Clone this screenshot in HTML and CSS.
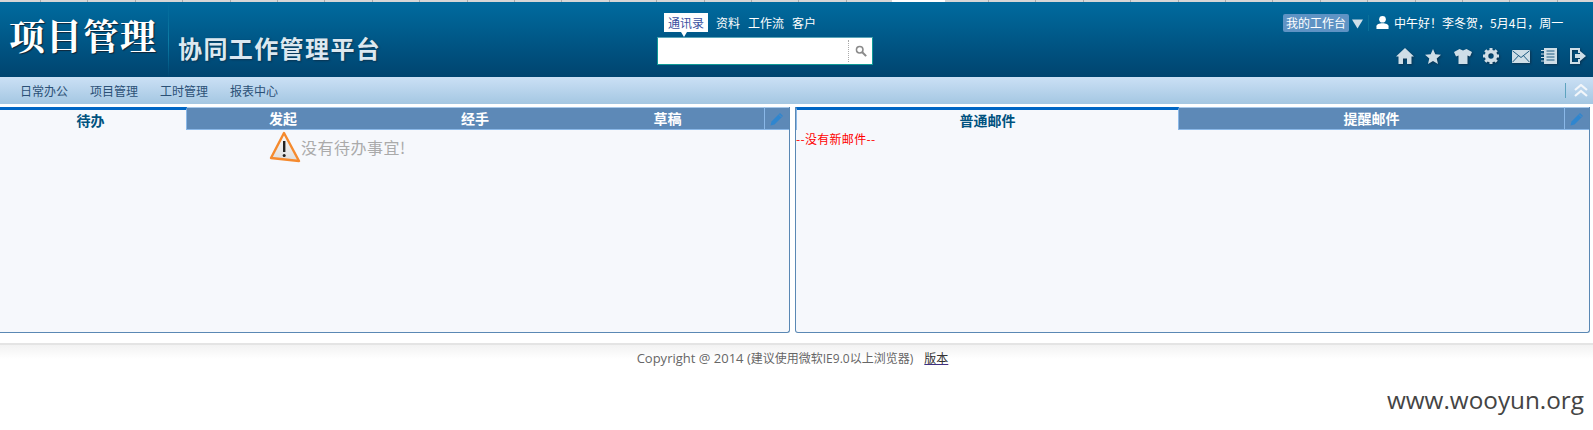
FILE: index.html
```html
<!DOCTYPE html>
<html lang="zh-CN">
<head>
<meta charset="utf-8">
<title>协同工作管理平台</title>
<link rel="stylesheet" href="styles.css">
</head>
<body>
<div class="strip"><span class="strip-active"></span></div>
<header class="header">
  <div class="brand">
    <div class="logo">项目管理</div>
    <div class="subtitle">协同工作管理平台</div>
  </div>
  <div class="search-col">
    <div class="search-tabs">
      <span class="search-tab active">通讯录</span>
      <span class="search-tab">资料</span>
      <span class="search-tab">工作流</span>
      <span class="search-tab">客户</span>
    </div>
    <div class="search-box">
      <span class="search-input"></span>
      <span class="search-btn">
        <svg width="12" height="12" viewBox="0 0 14 14"><circle cx="5.5" cy="5.5" r="3.8" fill="none" stroke="#8a8a8a" stroke-width="1.8"/><path d="M8.5 8.5L13 13" stroke="#8a8a8a" stroke-width="2.4"/></svg>
      </span>
    </div>
  </div>
  <div class="user-col">
    <div class="user-row">
      <span class="workbench">我的工作台</span>
      <svg class="caret" width="11" height="10" viewBox="0 0 12 10"><path d="M0 0H12L6 10Z" fill="#cfdfe9"/></svg>
      <span class="user-sep"></span>
      <svg class="user-icon" width="13" height="15" viewBox="0 0 14 15"><circle cx="7" cy="4" r="3.6" fill="#fff"/><path d="M0.500 14.500V11.500C0.500 9.500 3.500 8.300 7 8.300C10.500 8.300 13.500 9.500 13.500 11.500V14.500Z" fill="#fff"/></svg>
      <span class="greeting">中午好！李冬贺，5月4日，周一</span>
    </div>
    <div class="tool-row">
      <svg width="18" height="16" viewBox="0 0 18 16"><path d="M9 0L18 8.500H15.500V16H11V10.500H7V16H2.500V8.500H0Z" fill="#cfdee7"/></svg>
      <svg width="16" height="15" viewBox="0 0 16 15"><path d="M8 0L10.300 5.200L16 5.800L11.700 9.500L13 15L8 12.100L3 15L4.300 9.500L0 5.800L5.700 5.200Z" fill="#cfdee7"/></svg>
      <svg width="18" height="15" viewBox="0 0 18 15"><path d="M5.500 0L9 1.500L12.500 0L18 3L16 7.500L13.500 6.500V15H4.500V6.500L2 7.500L0 3Z" fill="#cfdee7"/></svg>
      <svg width="16" height="16" viewBox="0 0 16 16"><circle cx="8" cy="8" r="4.500" fill="none" stroke="#cfdee7" stroke-width="3.600"/><path d="M8 0V3M8 13V16M0 8H3M13 8H16M2.300 2.300L4.400 4.400M11.600 11.600L13.700 13.700M13.700 2.300L11.600 4.400M4.400 11.600L2.300 13.700" stroke="#cfdee7" stroke-width="3"/></svg>
      <svg width="18" height="13" viewBox="0 0 18 13"><rect width="18" height="13" fill="#cfdee7"/><path d="M0.500 0.800L9 7.500L17.500 0.800M0.500 12.200L6.500 5.700M17.500 12.200L11.500 5.700" fill="none" stroke="#1f5c82" stroke-width="1"/></svg>
      <svg width="16" height="16" viewBox="0 0 16 16"><rect x="3" y="0" width="13" height="16" fill="#cfdee7"/><path d="M5.500 3H13.500M5.500 6H13.500M5.500 9H13.500M5.500 12H13.500" stroke="#1f5c82" stroke-width="1"/><path d="M0 2.500H3M0 6H3M0 9.500H3M0 13H3" stroke="#cfdee7" stroke-width="1.200"/></svg>
      <svg width="16" height="16" viewBox="0 0 16 16"><path d="M0 0H10V5H8V2H2V14H8V11H10V16H0Z" fill="#cfdee7"/><path d="M5 6H10V3L16 8L10 13V10H5Z" fill="#cfdee7"/></svg>
    </div>
  </div>
</header>
<nav class="nav">
  <a class="nav-item">日常办公</a>
  <a class="nav-item">项目管理</a>
  <a class="nav-item">工时管理</a>
  <a class="nav-item">报表中心</a>
  <span class="nav-spacer"></span>
  <span class="nav-sep"></span>
  <svg class="collapse" width="14" height="13" viewBox="0 0 14 13"><path d="M1 6L7 1L13 6M1 12L7 7L13 12" fill="none" stroke="#f2f6fa" stroke-width="2.200"/></svg>
</nav>
<div class="gap"></div>
<main class="panels">
  <section class="panel panel-left">
    <div class="tabs">
      <span class="tab active">待办</span>
      <span class="tab">发起</span>
      <span class="tab">经手</span>
      <span class="tab">草稿</span>
      <span class="tab-edit">
        <svg width="14" height="14" viewBox="0 0 14 14"><path d="M0.500 13.500L1.500 9.500L10 1L13 4L4.500 12.500Z" fill="#2f86cf"/><path d="M9 2.500L11.500 5" stroke="#5d89b7" stroke-width="1"/></svg>
      </span>
    </div>
    <div class="empty">
      <svg width="32" height="32" viewBox="0 0 32 32">
        <defs><linearGradient id="warn" x1="0" y1="0" x2="0" y2="1"><stop offset="0" stop-color="#fafafa"/><stop offset="1" stop-color="#dedede"/></linearGradient></defs>
        <path d="M15 2L30 30L2 27Z" fill="url(#warn)" stroke="#f58a2e" stroke-width="2.400" stroke-linejoin="round"/>
        <path d="M15.200 10V21" stroke="#222" stroke-width="2.400"/>
        <circle cx="15.200" cy="24.500" r="1.500" fill="#222"/>
      </svg>
      <span>没有待办事宜!</span>
    </div>
  </section>
  <section class="panel panel-right">
    <div class="tabs">
      <span class="tab wide active">普通邮件</span>
      <span class="tab wide">提醒邮件</span>
      <span class="tab-edit">
        <svg width="14" height="14" viewBox="0 0 14 14"><path d="M0.500 13.500L1.500 9.500L10 1L13 4L4.500 12.500Z" fill="#2f86cf"/><path d="M9 2.500L11.500 5" stroke="#5d89b7" stroke-width="1"/></svg>
      </span>
    </div>
    <div class="no-mail">--没有新邮件--</div>
  </section>
</main>
<footer class="footer">
  <span><span class="latin">Copyright @ 2014 (</span>建议使用微软IE9.0以上浏览器)</span>
  <a class="version">版本</a>
</footer>
<div class="watermark">www.wooyun.org</div>
</body>
</html>
```

FILE: styles.css
```css
* { box-sizing: border-box; }
html, body { margin: 0; padding: 0; height: 430px; overflow: hidden; background: #fff; }
body { font-family: "Open Sans", "Noto Sans CJK SC", sans-serif; font-size: 12px; }

.strip {
  height: 2px;
  background: repeating-linear-gradient(90deg, #d6d6d6 0, #d6d6d6 40px, #aaa 40px, #aaa 41px, #d6d6d6 41px, #d6d6d6 47.400px);
  display: flex;
}
.strip-active { width: 53px; margin-left: 892px; background: #fff; }

.header {
  height: 75px;
  display: grid;
  grid-template-columns: 657px 626px 1fr;
  background: linear-gradient(#006b9f, #00446f);
  color: #fff;
}
.brand { display: flex; align-items: flex-start; padding-left: 9px; }
.logo {
  width: 160px;
  height: 75px;
  padding-top: 9px;
  font-family: "Noto Serif CJK SC", "Liberation Serif", "Noto Sans CJK SC", serif;
  font-size: 36px;
  font-weight: 700;
  line-height: 48px;
  letter-spacing: 1px;
  border-right: 1px solid #0e7ea6;
  border-image: linear-gradient(#00689a00, #0e7ea6, #00689a00) 1;
  text-shadow: 1px 1px 1px #123;
  white-space: nowrap;
}
.subtitle {
  margin-left: 9px;
  padding-top: 29px;
  font-family: "Noto Sans CJK SC", sans-serif;
  font-size: 24px;
  font-weight: 700;
  line-height: 34px;
  letter-spacing: 1.400px;
  color: #dce8f0;
  text-shadow: 1px 1px 2px #0b3350;
  white-space: nowrap;
}

.search-col { padding-top: 11px; display: flex; flex-direction: column; align-items: flex-start; }
.search-tabs { display: flex; padding-left: 7px; height: 19px; align-items: center; gap: 8px; font-family: "Noto Sans CJK SC", sans-serif; }
.search-tab { line-height: 19px; }
.search-tab.active { position: relative; background: #fff; color: #3a4fa0; padding: 0 4px; }
.search-tab.active::after {
  content: "";
  position: absolute;
  left: 17px;
  top: 19px;
  border: 3px solid transparent;
  border-top: 5px solid #fff;
  border-bottom: 0;
}
.search-box {
  margin-top: 5px;
  width: 216px;
  height: 28px;
  display: flex;
  background: #fff;
  border: 1px solid #0f9a96;
  border-top-color: #5aa5b8;
}
.search-input { flex: 1; }
.search-btn {
  width: 24px;
  display: flex;
  align-items: center;
  justify-content: center;
  margin: 2px 0;
  border-left: 1px dotted #aaa;
}

.user-row { height: 36px; padding-top: 12px; display: flex; align-items: flex-start; font-family: "Noto Sans CJK SC", sans-serif; }
.workbench { background: #5f93c4; border-radius: 2px; padding: 0 3px; line-height: 18px; height: 18px; width: 66px; white-space: nowrap; }
.caret { margin: 5px 0 0 3px; }
.user-sep { width: 1px; height: 16px; margin: 1px 7px 0 5px; background: #0a7099; }
.user-icon { margin-top: 1px; }
.greeting { margin-left: 5px; line-height: 18px; white-space: nowrap; }
.tool-row { display: flex; align-items: center; gap: 10px; padding: 10px 0 0 110px; }
.tool-row svg { flex: none; filter: drop-shadow(1px 1px 1px #0b3350); }
.tool-row svg:nth-child(odd) { margin-left: 3px; }
.tool-row svg:nth-child(even) { margin-left: 1px; }

.nav {
  height: 27px;
  display: flex;
  align-items: center;
  padding-left: 20px;
  gap: 22px;
  background: linear-gradient(#cbe0f5, #a4c7e2);
  font-family: "Noto Sans CJK SC", sans-serif;
}
.nav-item { color: #2b5076; line-height: 27px; }
.nav-spacer { flex: 1; }
.nav-sep { width: 1px; height: 15px; margin-right: -14px; background: #5ea3bf; }
.collapse { margin-right: 5px; }

.gap { height: 3px; }

.panels { display: flex; gap: 5px; margin-left: -6px; height: 226px; }
.panel {
  height: 226px;
  background: #f6f8fc;
  border: 1px solid #5a88b4;
  border-top: 0;
  border-radius: 0 0 3px 3px;
  font-family: "Noto Sans CJK SC", sans-serif;
}
.panel-left { width: 796px; }
.panel-right { width: 795px; }
.tabs { display: flex; height: 23px; }
.tab {
  width: 192px;
  text-align: center;
  font-size: 14px;
  font-weight: 700;
  line-height: 21px;
  color: #fff;
  background: #5d89b7;
  border-top: 1px solid #a6c8ea;
  border-bottom: 1px solid #8ab8e8;
}
.panel-left .tab:nth-child(4) { width: 193px; }
.tab.wide { width: 383px; }
.tab.wide + .tab.wide { width: 385px; }
.tab.active {
  background: transparent;
  color: #00527f;
  border-top: 3px solid #0066c4;
  border-bottom: 0;
  line-height: 20px;
  border-right: 1px solid #8ab8e8;
}
.tab-edit {
  flex: 1;
  display: flex;
  align-items: center;
  justify-content: center;
  background: #5d89b7;
  border-top: 1px solid #a6c8ea;
  border-bottom: 1px solid #8ab8e8;
  border-left: 1px solid #8ab8e8;
}
.panel-right .tab.active { border-left: 1px solid #8ab8e8; }

.empty {
  display: flex;
  align-items: center;
  padding-left: 274px;
  margin-top: 1px;
  font-size: 16px;
  color: #aaa;
  letter-spacing: 0.500px;
}
.no-mail { color: #f00; line-height: 14px; margin-top: 2px; letter-spacing: 0.300px; }

.footer {
  margin-top: 10px;
  height: 40px;
  padding: 4px 8px 0 0;
  text-align: center;
  color: #666;
  border-top: 2px solid #e4e4e4;
  background: linear-gradient(#f2f2f2, #fff 14px);
  line-height: 18px;
  font-size: 12px;
}
.latin { font-size: 13px; }
.version { margin-left: 8px; color: #333; text-decoration: underline; text-decoration-color: #403080; }

.watermark {
  text-align: right;
  padding-right: 9px;
  font-family: "Open Sans", sans-serif;
  font-size: 24.300px;
  line-height: 34px;
  color: #444;
}
```
